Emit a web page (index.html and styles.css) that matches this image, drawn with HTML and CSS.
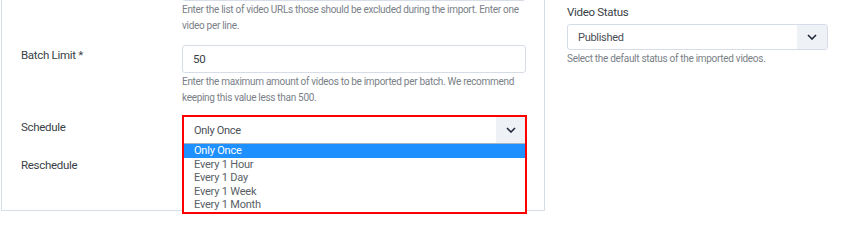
FILE: index.html
```html
<!DOCTYPE html>
<html lang="en">
<head>
    <meta charset="UTF-8">
    <meta name="viewport" content="width=device-width, initial-scale=1.0">
    <title>Import Settings</title>
    <link rel="stylesheet" href="styles.css">
</head>
<body>
    <div class="settings">
        <!-- Left panel: import options -->
        <div class="panel">
            <div class="form-row">
                <div class="form-label"></div>
                <div class="form-field">
                    <div class="textarea"></div>
                    <p class="help">Enter the list of video URLs those should be excluded during the import. Enter one video per line.</p>
                </div>
            </div>

            <div class="form-row">
                <label class="form-label">Batch Limit *</label>
                <div class="form-field">
                    <div class="input">50</div>
                    <p class="help">Enter the maximum amount of videos to be imported per batch. We recommend keeping this value less than 500.</p>
                </div>
            </div>

            <div class="form-row">
                <label class="form-label">Schedule</label>
                <div class="form-field field-select">
                    <div class="select-open">
                        <div class="select-current">
                            <span>Only Once</span>
                            <span class="select-arrow">
                                <svg width="10" height="6" viewBox="0 0 10 6"><path d="M1 1l4 4 4-4" fill="none" stroke="#1f2937" stroke-width="1.6"/></svg>
                            </span>
                        </div>
                        <ul class="select-list">
                            <li class="selected">Only Once</li>
                            <li>Every 1 Hour</li>
                            <li>Every 1 Day</li>
                            <li>Every 1 Week</li>
                            <li>Every 1 Month</li>
                        </ul>
                    </div>
                </div>
            </div>

            <div class="form-row">
                <label class="form-label">Reschedule</label>
                <div class="form-field field-select"></div>
            </div>
        </div>

        <!-- Right column: status -->
        <div class="sidebar">
            <label class="side-label">Video Status</label>
            <div class="select">
                <span>Published</span>
                <span class="select-arrow">
                    <svg width="10" height="6" viewBox="0 0 10 6"><path d="M1 1l4 4 4-4" fill="none" stroke="#1f2937" stroke-width="1.6"/></svg>
                </span>
            </div>
            <p class="help">Select the default status of the imported videos.</p>
        </div>
    </div>
</body>
</html>
```

FILE: styles.css
```css
html, body {
    min-height: 100vh;
}

body {
    margin: 0;
    background: #fff;
    font-family: Roboto, "Liberation Sans", sans-serif;
    color: #3a3f47;
}

.settings {
    display: flex;
    align-items: flex-start;
    gap: 22px;
    padding-left: 1px;
}

.panel {
    width: 505px;
    border: 1px solid #d6dde8;
    border-top: none;
    padding: 0 18px 29px 19px;
}

.form-row {
    display: grid;
    grid-template-columns: 161px 344px;
    margin-bottom: 12px;
}

.form-row:last-child {
    margin-bottom: 0;
}

.form-label {
    font-size: 11.5px;
    letter-spacing: -0.3px;
    line-height: 16px;
    padding-top: 2px;
    color: #3a3f47;
}

.textarea {
    height: 30px;
    margin-top: -31px;
    border: 1px solid #d6dde8;
    border-radius: 3px;
}

.input {
    height: 26px;
    border: 1px solid #d6dde8;
    border-radius: 3px;
    font-size: 11.5px;
    letter-spacing: -0.2px;
    line-height: 26px;
    padding-left: 10px;
    color: #3a3f47;
}

.help {
    margin: 1px 0 0;
    font-size: 10px;
    letter-spacing: -0.3px;
    line-height: 15.5px;
    color: #7a7f87;
}

.field-select {
    position: relative;
    height: 26px;
}

.select-open {
    position: absolute;
    top: -2px;
    left: 0;
    z-index: 2;
    width: 341px;
    border: 2px solid #ff0000;
    background: #fff;
}

.select-current {
    display: flex;
    justify-content: space-between;
    align-items: center;
    height: 26px;
    border-bottom: 1px solid #a9b4c4;
    padding-left: 10px;
    font-size: 11px;
    letter-spacing: -0.3px;
    color: #4a4f57;
}

.select-arrow {
    display: flex;
    align-items: center;
    justify-content: center;
    width: 29px;
    height: 100%;
    background: #eef1f6;
}

.select-list {
    list-style: none;
    margin: 0;
    padding: 0;
}

.select-list li {
    font-size: 11px;
    letter-spacing: -0.2px;
    line-height: 13.5px;
    padding-left: 10px;
    color: #5a5f66;
}

.select-list li.selected {
    background: #1e90ff;
    color: #fff;
}

.sidebar {
    width: 261px;
    padding-top: 4px;
}

.side-label {
    display: block;
    font-size: 11.5px;
    letter-spacing: -0.3px;
    line-height: 16px;
    margin-bottom: 4px;
}

.select {
    display: flex;
    justify-content: space-between;
    align-items: center;
    height: 24px;
    border: 1px solid #d6dde8;
    border-radius: 3px;
    padding-left: 10px;
    font-size: 11px;
    letter-spacing: -0.3px;
    color: #4a4f57;
    overflow: hidden;
}

.select .select-arrow {
    width: 30px;
}
```
